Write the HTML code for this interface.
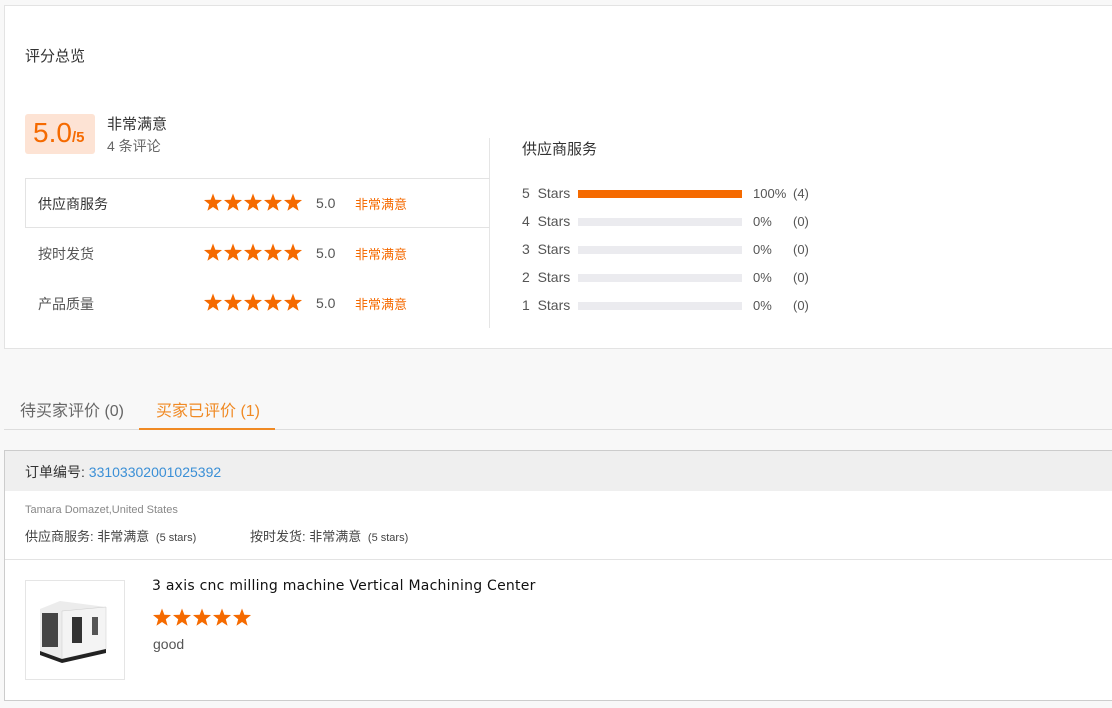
<!DOCTYPE html>
<html><head><meta charset="utf-8"><style>
*{margin:0;padding:0;box-sizing:border-box}
body{width:1112px;height:708px;background:#f8f8f8;font-family:"Liberation Sans","Noto Sans CJK SC",sans-serif;color:#333;position:relative;overflow:hidden}
.a{position:absolute;white-space:nowrap}
.bar{position:absolute;left:578px;width:164px;height:8px;background:#ebebef}
</style></head><body>
<svg width="0" height="0" style="position:absolute"><defs>
<polygon id="s" points="10,0.5 12.35,6.76 19.04,7.06 13.8,11.24 15.58,17.69 10,14 4.42,17.69 6.2,11.24 0.96,7.06 7.65,6.76" fill="#f56a00"/>
<g id="s5"><use href="#s"/><use href="#s" x="20"/><use href="#s" x="40"/><use href="#s" x="60"/><use href="#s" x="80"/></g>
</defs></svg>
<div class="a" style="left:4px;top:5px;width:1112px;height:344px;background:#fff;border:1px solid #e3e3e3"></div>
<div class="a" style="left:25px;top:45px;font-size:15px;color:#333">评分总览</div>
<div class="a" style="left:25px;top:114px;width:70px;height:40px;background:#fde3d4;border-radius:3px"></div>
<div class="a" style="left:33px;top:117px;font-size:28px;color:#f56a00">5.0<span style="font-size:15px;font-weight:bold">/5</span></div>
<div class="a" style="left:107px;top:113px;font-size:15px;color:#333">非常满意</div>
<div class="a" style="left:107px;top:136px;font-size:14px;color:#666">4 条评论</div>
<div class="a" style="left:489px;top:138px;width:1px;height:190px;background:#e5e5e5"></div>
<div class="a" style="left:25px;top:178px;width:465px;height:50px;border:1px solid #e3e3e3;border-right:none"></div>
<div class="a" style="left:38px;top:194px;font-size:14px;color:#333">供应商服务</div>
<svg class="a" style="left:203px;top:193px" width="100" height="20"><use href="#s5"/></svg>
<div class="a" style="left:316px;top:195px;font-size:14px;color:#555">5.0</div>
<div class="a" style="left:355px;top:194px;font-size:13px;color:#f56a00">非常满意</div>
<div class="a" style="left:38px;top:244px;font-size:14px;color:#555">按时发货</div>
<svg class="a" style="left:203px;top:243px" width="100" height="20"><use href="#s5"/></svg>
<div class="a" style="left:316px;top:245px;font-size:14px;color:#555">5.0</div>
<div class="a" style="left:355px;top:244px;font-size:13px;color:#f56a00">非常满意</div>
<div class="a" style="left:38px;top:294px;font-size:14px;color:#555">产品质量</div>
<svg class="a" style="left:203px;top:293px" width="100" height="20"><use href="#s5"/></svg>
<div class="a" style="left:316px;top:295px;font-size:14px;color:#555">5.0</div>
<div class="a" style="left:355px;top:294px;font-size:13px;color:#f56a00">非常满意</div>
<div class="a" style="left:522px;top:138px;font-size:15px;color:#333">供应商服务</div>
<div class="a" style="left:522px;top:185px;font-size:14px;color:#555">5&nbsp; Stars</div>
<div class="bar" style="top:190px;background:#f56a00"></div>
<div class="a" style="left:753px;top:186px;font-size:13px;color:#555">100%</div>
<div class="a" style="left:793px;top:186px;font-size:13px;color:#555">(4)</div>
<div class="a" style="left:522px;top:213px;font-size:14px;color:#555">4&nbsp; Stars</div>
<div class="bar" style="top:218px"></div>
<div class="a" style="left:753px;top:214px;font-size:13px;color:#555">0%</div>
<div class="a" style="left:793px;top:214px;font-size:13px;color:#555">(0)</div>
<div class="a" style="left:522px;top:241px;font-size:14px;color:#555">3&nbsp; Stars</div>
<div class="bar" style="top:246px"></div>
<div class="a" style="left:753px;top:242px;font-size:13px;color:#555">0%</div>
<div class="a" style="left:793px;top:242px;font-size:13px;color:#555">(0)</div>
<div class="a" style="left:522px;top:269px;font-size:14px;color:#555">2&nbsp; Stars</div>
<div class="bar" style="top:274px"></div>
<div class="a" style="left:753px;top:270px;font-size:13px;color:#555">0%</div>
<div class="a" style="left:793px;top:270px;font-size:13px;color:#555">(0)</div>
<div class="a" style="left:522px;top:297px;font-size:14px;color:#555">1&nbsp; Stars</div>
<div class="bar" style="top:302px"></div>
<div class="a" style="left:753px;top:298px;font-size:13px;color:#555">0%</div>
<div class="a" style="left:793px;top:298px;font-size:13px;color:#555">(0)</div>

<div class="a" style="left:20px;top:397px;font-size:16px;color:#666">待买家评价 (0)</div>
<div class="a" style="left:156px;top:397px;font-size:16px;color:#f08a24">买家已评价 (1)</div>
<div class="a" style="left:4px;top:429px;width:1108px;height:1px;background:#ddd"></div>
<div class="a" style="left:139px;top:428px;width:136px;height:2px;background:#f08a24"></div>

<div class="a" style="left:4px;top:450px;width:1112px;height:251px;background:#fff;border:1px solid #ccc"></div>
<div class="a" style="left:5px;top:451px;width:1107px;height:40px;background:#efefef"></div>
<div class="a" style="left:25px;top:462px;font-size:14px;color:#333">订单编号: <span style="color:#3a8fd6">33103302001025392</span></div>
<div class="a" style="left:25px;top:504px;font-size:11px;color:#888">Tamara Domazet,United States</div>
<div class="a" style="left:25px;top:526px;font-size:13px;color:#444">供应商服务: 非常满意 <span style="font-size:11px">&nbsp;(5 stars)</span></div>
<div class="a" style="left:250px;top:526px;font-size:13px;color:#444">按时发货: 非常满意 <span style="font-size:11px">&nbsp;(5 stars)</span></div>
<div class="a" style="left:5px;top:559px;width:1107px;height:1px;background:#e3e3e3"></div>
<div class="a" style="left:25px;top:580px;width:100px;height:100px;border:1px solid #e5e5e5;background:#fff"></div>
<svg class="a" style="left:34px;top:597px" width="80" height="68" viewBox="0 0 80 68">
<polygon points="6,12 26,4 72,10 72,52 28,62 6,54" fill="#ececec"/>
<polygon points="28,14 72,10 72,52 28,62" fill="#f4f4f4" stroke="#ccc" stroke-width="0.5"/>
<rect x="8" y="16" width="16" height="34" fill="#444"/>
<rect x="38" y="20" width="10" height="26" fill="#333"/>
<rect x="58" y="20" width="6" height="18" fill="#555"/>
<polygon points="6,54 28,62 72,52 72,56 28,66 6,58" fill="#222"/>
</svg>
<div class="a" style="left:152px;top:578px;font-size:14px;color:#111;font-family:'DejaVu Sans',sans-serif;letter-spacing:0.25px">3 axis cnc milling machine Vertical Machining Center</div>
<svg class="a" style="left:152px;top:608px" width="100" height="20"><use href="#s5"/></svg>
<div class="a" style="left:153px;top:636px;font-size:14px;color:#555">good</div>
</body></html>
